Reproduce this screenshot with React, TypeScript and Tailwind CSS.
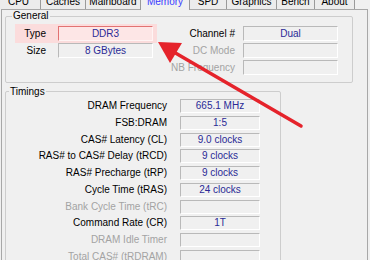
import React from "react";

const tabs = [
  { name: "CPU", w: "w-[44px] -ml-[3px]" },
  { name: "Caches", w: "w-[45px]" },
  { name: "Mainboard", w: "w-[55px]" },
  { name: "Memory", w: "w-[50px]", active: true },
  { name: "SPD", w: "w-[37px]" },
  { name: "Graphics", w: "w-[50px]" },
  { name: "Bench", w: "w-[38px]" },
  { name: "About", w: "w-[40px]" },
];

function Box({ value, w, h = "h-[15px]" }: { value?: string; w: string; h?: string }) {
  return (
    <div
      className={`${w} ${h} flex shrink-0 items-center justify-center border border-t-[#b9b9b9] border-l-[#b9b9b9] border-b-white border-r-white bg-[#f0f0f0] text-[#2a2a96]`}
    >
      {value}
    </div>
  );
}

const timings: { label: string; value?: string; dis?: boolean }[] = [
  { label: "DRAM Frequency", value: "665.1 MHz" },
  { label: "FSB:DRAM", value: "1:5" },
  { label: "CAS# Latency (CL)", value: "9.0 clocks" },
  { label: "RAS# to CAS# Delay (tRCD)", value: "9 clocks" },
  { label: "RAS# Precharge (tRP)", value: "9 clocks" },
  { label: "Cycle Time (tRAS)", value: "24 clocks" },
  { label: "Bank Cycle Time (tRC)", dis: true },
  { label: "Command Rate (CR)", value: "1T" },
  { label: "DRAM Idle Timer", dis: true },
  { label: "Total CAS# (tRDRAM)", dis: true },
  { label: "Row To Column (tRCD)", dis: true },
];

export default function App() {
  return (
    <div className="relative h-[260px] w-[370px] overflow-hidden bg-[#f0f0f0] font-['Liberation_Sans',Arial,sans-serif] text-[10px] leading-[12px] text-black">
      {/* tab strip */}
      <div className="flex h-[9px] items-start">
        {tabs.map((t) => (
          <div
            key={t.name}
            className={`${t.w} relative flex shrink-0 justify-center border-r border-[#9a9a9a] ${
              t.active ? "z-10 h-[10px] border-l bg-[#f0f0f0] text-[#3a3aff] -ml-px" : "h-[9px] bg-[#ececec]"
            }`}
          >
            <span className="relative -top-[4px] whitespace-nowrap">{t.name}</span>
          </div>
        ))}
      </div>

      {/* tab page */}
      <div className="ml-[1px] h-[260px] w-[367px] border-l border-r border-t border-[#a8a8a8]">
        {/* General */}
        <div className="relative ml-[3px] mt-[6px] h-[67px] w-[348px] rounded-[2px] border border-[#cdcdcd] pt-[9px]">
          <span className="absolute left-[6px] -top-[7px] bg-[#f0f0f0] px-px">General</span>
          <div className="flex flex-col gap-[2px]">
            <div className="relative flex h-[15px] items-center">
              <div className="absolute left-[9px] -top-[2px] h-[19px] w-[142px] bg-[#fbdcdc]" />
              <div className="relative w-[40px] text-right">Type</div>
              <div className="relative ml-[12px] flex h-[15px] w-[95px] items-center justify-center border border-t-[#e27272] border-l-[#e27272] border-b-[#fff4f4] border-r-[#fff4f4] bg-[#fde6e6] text-[#2a2a96]">
                DDR3
              </div>
              <div className="w-[82px] text-right">Channel #</div>
              <div className="ml-[8px]">
                <Box value="Dual" w="w-[95px]" />
              </div>
            </div>
            <div className="flex h-[15px] items-center">
              <div className="w-[40px] text-right">Size</div>
              <div className="ml-[12px]">
                <Box value="8 GBytes" w="w-[95px]" />
              </div>
              <div className="w-[82px] text-right text-[#a3a3a3]">DC Mode</div>
              <div className="ml-[8px]">
                <Box w="w-[95px]" />
              </div>
            </div>
            <div className="flex h-[15px] items-center">
              <div className="w-[147px]" />
              <div className="w-[82px] text-right text-[#a3a3a3]">NB Frequency</div>
              <div className="ml-[8px]">
                <Box w="w-[95px]" />
              </div>
            </div>
          </div>
        </div>

        {/* Timings */}
        <div className="relative ml-[3px] mt-[8px] h-[200px] w-[276px] rounded-[2px] border border-[#cdcdcd] pt-[7px]">
          <span className="absolute left-[3px] -top-[6px] bg-[#f0f0f0] px-px">Timings</span>
          <div className="flex flex-col gap-[2.75px]">
            {timings.map((r) => (
              <div key={r.label} className="flex h-[14px] items-center">
                <div className={`w-[161px] whitespace-nowrap text-right ${r.dis ? "text-[#a3a3a3]" : ""}`}>{r.label}</div>
                <div className="ml-[13px]">
                  <Box value={r.value} w="w-[80px]" h="h-[14px]" />
                </div>
              </div>
            ))}
          </div>
        </div>
      </div>

      {/* red arrow annotation */}
      <svg className="pointer-events-none absolute left-0 top-0" width="370" height="260" viewBox="0 0 370 260">
        <line x1="301" y1="126" x2="172" y2="51" stroke="#e5232b" strokeWidth="3.5" strokeLinecap="round" />
        <polygon points="158,42 182,43 170,63" fill="#e5232b" />
      </svg>
    </div>
  );
}
